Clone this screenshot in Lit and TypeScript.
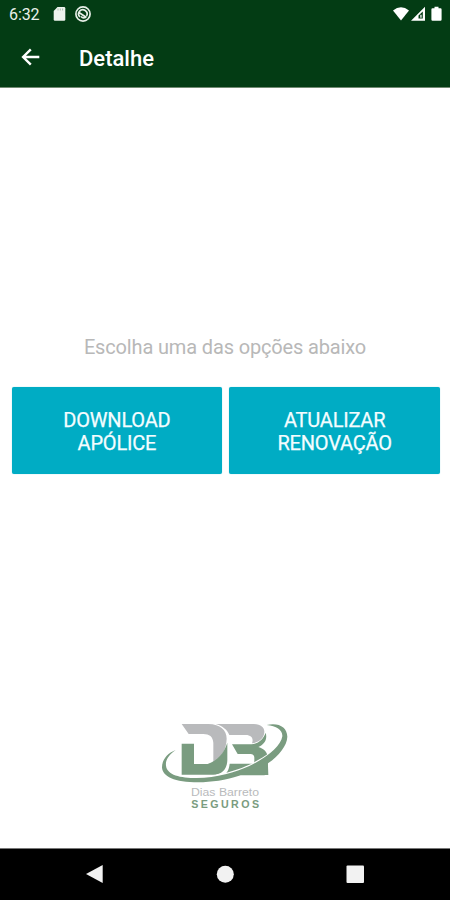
import { LitElement, html, css, svg } from "lit";
import { customElement } from "lit/decorators.js";

const logo = svg`
  <path fill="#b9babc" d="M95 42H175C211 43 230 60 230 86C229 119 214 144 190 158V99C189 80 178 72 160 72H116Z"/>
  <path fill="#b9babc" d="M197 42H305C332 42 344 52 343 67C341 87 327 97 306 100C311 87 306 75 287 75H238C233 60 218 48 197 42Z"/>
  <path fill="#7a9c80" d="M95 101H132V162H173C203 151 222 130 232 98V151C231 178 216 194 190 194H95Z"/>
  <path fill="#7a9c80" d="M246 103H304C325 101 340 88 347 68C353 88 343 103 325 111C343 117 353 127 353 142L355 195H222C233 187 237 177 239 161H313V143Q313 133 301 132H263Z"/>
  <path fill="#fff" d="M400 95C350 140 285 181 202 193L197 195L202 203L290 178L358 141Z"/>
  <path fill="#7a9c80" d="M350 45C387 37 411 52 412 80C411 107 387 137 354 160C351 174 347 186 344 196H272C226 211 184 217 145 217C73 217 37 200 36 172C36 150 51 130 77 120C55 136 46 150 48 167C51 195 91 204 140 204C201 204 256 187 298 168C356 140 393 106 397 79C398 59 380 49 350 45Z"/>
  <text class="name" x="123" y="257" textLength="204" lengthAdjust="spacingAndGlyphs">Dias Barreto</text>
  <text class="trade" x="124" y="293" textLength="203">SEGUROS</text>`;

@customElement("app-root")
export class AppRoot extends LitElement {
  static styles = css`
    :host { display: flex; flex-direction: column; width: 100%; height: 900px;
      background: #fff; font-family: Roboto, "Noto Sans", sans-serif; overflow: hidden; }
    svg { display: block; }
    header { height: 87px; flex: none; background: #033c14; color: #fff; border-bottom: 1px solid #718a72; box-sizing: content-box; }
    .status { height: 28px; display: flex; align-items: center; justify-content: space-between; }
    .left { display: flex; align-items: center; padding-left: 9px; }
    .time { font-size: 16px; width: 43px; letter-spacing: -.1px; color: #e9f0e9; }
    .signals { margin-right: 5px; }
    .toolbar { height: 58px; display: flex; align-items: center; padding-left: 21px; }
    h1 { margin: 3px 0 0 39px; font-size: 22px; line-height: 28px; font-weight: 500; letter-spacing: 0; }
    main { flex: 1; display: flex; flex-direction: column; align-items: center; }
    p { margin: 246px 0 27px; font-size: 20px; line-height: 26px; color: #b8b8b8; letter-spacing: -.15px; white-space: nowrap; }
    .actions { width: 100%; box-sizing: border-box; padding: 0 10px 0 11.5px; display: grid; grid-template-columns: 1fr 1fr; gap: 7px; }
    button { height: 87px; border: 0; padding: 2px 0 0; border-radius: 2px; background: #00acc4; color: #f4fdff;
      font: 400 20px/23px Roboto, sans-serif; letter-spacing: -.2px; -webkit-text-stroke: .25px #f4fdff; text-align: center; box-shadow: 0 0 1px #6fc9d6; }
    .logo { margin-top: 236px; }
    .name { font: 30px "Liberation Sans", sans-serif; fill: #b9babc; }
    .trade { font: bold 32px "Liberation Sans", sans-serif; fill: #7a9c80; }
    nav { height: 51px; flex: none; background: #000; border-top: 1px solid #777; }
  `;

  render() {
    return html`
      <header>
        <div class="status">
          <div class="left">
            <span class="time">6:32</span>
            <svg width="40" height="18" viewBox="0 0 40 18">
              <path fill="#eef3ee" d="M5.5 2H12Q13.3 2 13.3 3.3V14.5Q13.3 15.8 12 15.8H3Q1.7 15.8 1.7 14.5V6Z"/>
              <path stroke="#a5b5a7" stroke-width=".9" d="M6 3.5V5.5M8.3 3.5V5.5M10.6 3.5V5.5"/>
              <circle cx="31" cy="9" r="7.1" fill="none" stroke="#e7eee7" stroke-width="1.7"/>
              <path fill="none" stroke="#e7eee7" stroke-width="1.7" d="M28 12A4.2 4.2 0 1 1 34.5 11M27 7.5L34.5 12.5M29 11.5Q31 13.6 33.5 12.3"/>
            </svg>
          </div>
          <svg class="signals" width="53" height="18" viewBox="0 0 53 18">
            <path fill="#fff" d="M1 5.5Q9 -.8 17 5.5L9 15.5Z"/>
            <path fill="#fff" fill-rule="evenodd" d="M19 15.7L33 1.8V15.7ZM26.5 10.5V13.5H30.8V6.6Z"/>
            <path fill="#fff" d="M28.3 9.7H29.6V12.8H28.3Z"/>
            <path fill="#fff" d="M40.5 3.2H42.5V1.7H46.5V3.2H48.5Q49.6 3.2 49.6 4.5V14.5Q49.6 15.7 48.5 15.7H40.5Q39.4 15.7 39.4 14.5V4.5Q39.4 3.2 40.5 3.2Z"/>
          </svg>
        </div>
        <div class="toolbar">
          <svg width="19" height="18" viewBox="0 0 19 18"><path fill="none" stroke="#fff" stroke-width="2.4" d="M18.3 9H2.2M9.8 1.3L2.1 9L9.8 16.7"/></svg>
          <h1>Detalhe</h1>
        </div>
      </header>
      <main>
        <p>Escolha uma das opções abaixo</p>
        <div class="actions">
          <button>DOWNLOAD<br>APÓLICE</button>
          <button>ATUALIZAR<br>RENOVAÇÃO</button>
        </div>
        <svg class="logo" width="150" height="110" viewBox="0 0 450 330">${logo}</svg>
      </main>
      <nav>
        <svg width="450" height="51" viewBox="0 0 450 51" fill="#f2f2f2">
          <path d="M86 25L102.7 16V34Z"/>
          <circle cx="225.3" cy="25.2" r="8.5"/>
          <rect x="346.5" y="16.5" width="17.5" height="17.5" rx="1"/>
        </svg>
      </nav>`;
  }
}
